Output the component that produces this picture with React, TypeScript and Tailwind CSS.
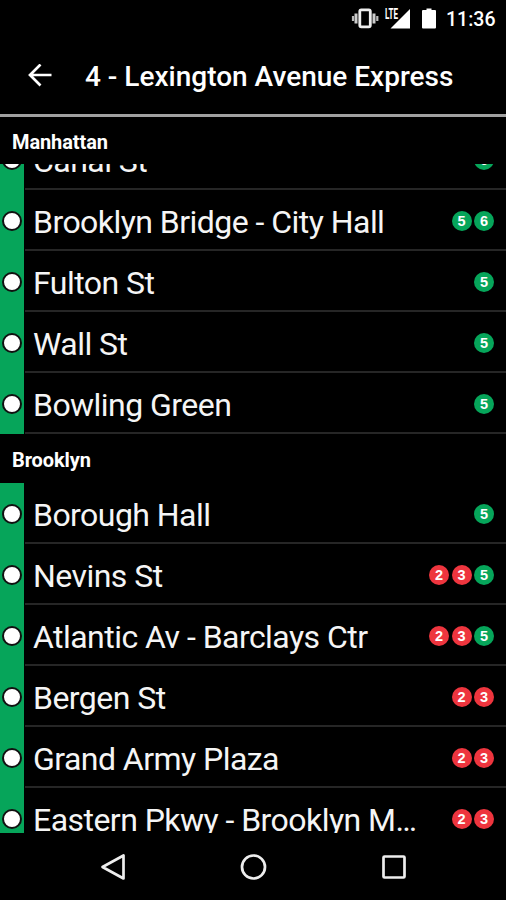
import React from 'react';

type Line = '2' | '3' | '5' | '6';

interface Station {
    name: string;
    lines: Line[];
}

const manhattan: Station[] = [
    { name: 'Brooklyn Bridge - City Hall', lines: ['5', '6'] },
    { name: 'Fulton St', lines: ['5'] },
    { name: 'Wall St', lines: ['5'] },
    { name: 'Bowling Green', lines: ['5'] },
];

const brooklyn: Station[] = [
    { name: 'Borough Hall', lines: ['5'] },
    { name: 'Nevins St', lines: ['2', '3', '5'] },
    { name: 'Atlantic Av - Barclays Ctr', lines: ['2', '3', '5'] },
    { name: 'Bergen St', lines: ['2', '3'] },
    { name: 'Grand Army Plaza', lines: ['2', '3'] },
    { name: 'Eastern Pkwy - Brooklyn Museum', lines: ['2', '3'] },
];

const lineColors: Record<Line, string> = {
    '2': 'bg-[#ee353e]',
    '3': 'bg-[#ee353e]',
    '5': 'bg-[#06a55a]',
    '6': 'bg-[#06a55a]',
};

const StatusBar: React.FC = () => (
    <div className="flex h-[38px] items-center justify-end pr-[11px] text-white">
        <svg width="90" height="24" viewBox="0 0 90 24" className="mr-[5px] shrink-0" aria-hidden="true">
            <rect x="8.8" y="2.8" width="10.5" height="17" rx="1.5" fill="none" stroke="#eee" strokeWidth="2.8" />
            <path d="M5 6.5v10M23 6.5v10" stroke="#ccc" strokeWidth="3" />
            <path d="M2 9v5M26.300 9v5" stroke="#bbb" strokeWidth="2.2" />
            <path d="M59 2v19.500H39.500z" fill="#fff" />
            <text x="34" y="11.5" fill="#fff" fontFamily="Roboto, sans-serif" fontWeight="700" fontSize="14" textLength="13" lengthAdjust="spacingAndGlyphs">LTE</text>
            <path d="M75.500 1.500h5v1.500h3.500a1 1 0 0 1 1 1V20.500a1 1 0 0 1-1 1H72a1 1 0 0 1-1-1V4a1 1 0 0 1 1-1H75.500z" fill="#fff" />
        </svg>
        <span className="w-[49px] pt-px text-[19.5px] leading-none font-medium">11:36</span>
    </div>
);

const LineBadge: React.FC<{ line: Line }> = ({ line }) => (
    <span className={`flex h-[20px] w-[20px] items-center justify-center rounded-full pt-px font-['Liberation_Sans',sans-serif] text-[14.5px] leading-none font-bold text-white ${lineColors[line]}`}>
        {line}
    </span>
);

const StationRow: React.FC<{ station: Station }> = ({ station }) => (
    <li className="flex h-[61px] shrink-0">
        <div className="flex w-[23.5px] shrink-0 items-center bg-[#06a55a] pt-px pl-[1.5px]">
            <div className="h-[20px] w-[20px] rounded-full border-2 border-[#111] bg-white"></div>
        </div>
        <div className="ml-[1.5px] flex min-w-0 flex-1 items-center border-b-2 border-[#262626] pr-[12px] pl-[8px]">
            <span className="w-[388px] shrink-0 truncate pt-[5px] text-[32px] leading-[42px] tracking-[-0.54px] text-[#f5f5f5]">{station.name}</span>
            <div className="flex flex-1 justify-end gap-[2.5px] pt-[2px]">
                {station.lines.map((line) => <LineBadge key={line} line={line} />)}
            </div>
        </div>
    </li>
);

const SectionTitle: React.FC<{ children: React.ReactNode }> = ({ children }) => (
    <h2 className="flex shrink-0 items-center pt-[2px] pl-[12px] text-[20px] leading-none font-bold tracking-[-0.1px] text-white">{children}</h2>
);

const App: React.FC = () => (
    <div className="flex h-[900px] w-[506px] flex-col overflow-hidden bg-black font-[Roboto,sans-serif]">
        <StatusBar />
        <header className="flex h-[79px] items-center border-b-[3px] border-[#a0a0a0] text-white">
            <svg width="24" height="24" viewBox="0 0 24 24" className="ml-[28px]" fill="none" stroke="currentColor" strokeWidth="2.7" aria-hidden="true">
                <path d="M23.500 11H2.500M12.500 .5L2 11l10.500 10.500" />
            </svg>
            <h1 className="ml-[33px] pt-[2px] text-[28px] leading-none font-medium whitespace-nowrap">4 - Lexington Avenue Express</h1>
        </header>

        <main className="flex h-[716px] flex-col overflow-hidden">
            <div className="grid h-[47px] shrink-0">
                <SectionTitle>Manhattan</SectionTitle>
            </div>
            {/* scrolled part-way under the section title */}
            <ul className="flex h-[26px] shrink-0 flex-col justify-end overflow-hidden">
                <StationRow station={{ name: 'Canal St', lines: ['6'] }} />
            </ul>
            <ul className="shrink-0">
                {manhattan.map((station) => <StationRow key={station.name} station={station} />)}
            </ul>
            <div className="grid h-[49px] shrink-0">
                <SectionTitle>Brooklyn</SectionTitle>
            </div>
            <ul className="shrink-0">
                {brooklyn.map((station) => <StationRow key={station.name} station={station} />)}
            </ul>
        </main>

        <nav className="flex flex-1 items-center pl-[100px]">
            <svg width="310" height="28" viewBox="0 0 310 28" fill="none" stroke="#eee" strokeWidth="2.7" strokeLinejoin="round" aria-hidden="true">
                <path d="M23.500 2.500v23L2.500 14z" />
                <circle cx="153.5" cy="14" r="11.5" />
                <rect x="283.5" y="3.5" width="21" height="21" rx="1" />
            </svg>
        </nav>
    </div>
);

export default App;
